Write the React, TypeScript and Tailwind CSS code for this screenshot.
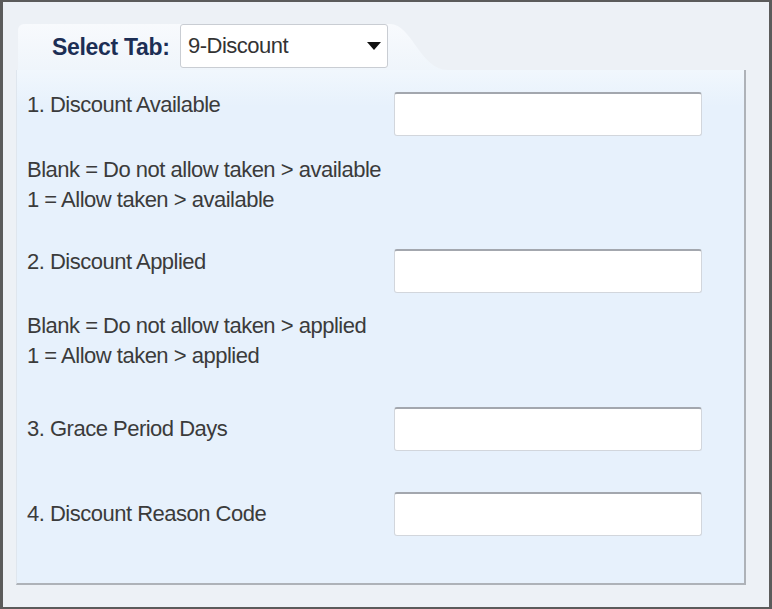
import React from "react";

const font = { fontFamily: '"Liberation Sans", Arial, sans-serif' };

function Field() {
  return (
    <div className="w-[308px] h-[44px] shrink-0 bg-white rounded-[3px] border border-[#d2d6dc] border-t-2 border-t-[#a3a7ae]" />
  );
}

export default function App() {
  return (
    <div
      className="w-[772px] h-[609px] box-border bg-[#edf1f6] border-[#5b5b5b] border-l-[3px] border-r-[3px] border-t-2 border-b-2 pl-[13px] pt-[22px] text-[#3b3b3b]"
      style={font}
    >
      {/* Header tab row */}
      <div className="flex h-[46px]">
        <div className="ml-[2px] w-[372px] h-full rounded-tl-[6px] bg-[linear-gradient(to_bottom,#f8fafd,#eff5fb)] flex items-center pl-[34px]">
          <span className="text-[23px] font-bold text-[#1c2e55] leading-none tracking-[-0.3px] w-[128px]">Select Tab:</span>
          <div className="-mt-[3px] w-[208px] h-[44px] bg-white rounded-[3px] border border-[#c9cdd3] flex items-center pl-[7px] pr-[6px]">
            <span className="text-[22px] text-[#333] leading-none flex-1 tracking-[-0.5px]">9-Discount</span>
            <svg width="14" height="8" viewBox="0 0 14 8">
              <path d="M0 0 L14 0 L7 8 Z" fill="#111" />
            </svg>
          </div>
        </div>
        <svg width="58" height="46" viewBox="0 0 58 46" className="shrink-0">
          <defs>
            <linearGradient id="tg" x1="0" y1="0" x2="0" y2="1">
              <stop offset="0" stopColor="#f8fafd" />
              <stop offset="1" stopColor="#eff5fb" />
            </linearGradient>
          </defs>
          <path d="M0 0 C 22 0, 30 46, 58 46 L0 46 Z" fill="url(#tg)" />
        </svg>
      </div>

      {/* Panel */}
      <div className="w-[730px] h-[515px] box-border border-l border-l-[#dfe6ee] border-r-2 border-b-2 border-r-[#aeb2b8] border-b-[#aeb2b8] bg-[linear-gradient(to_bottom,#f1f7fd_0px,#e7f1fc_36px)] pl-[10px] pt-[22px] text-[22px] tracking-[-0.5px]">
        <div className="flex items-start">
          <div className="w-[367px] leading-[24px] mt-[1px]">1. Discount Available</div>
          <Field />
        </div>
        <div className="mt-[19px] leading-[30px]">
          <div>Blank = Do not allow taken &gt; available</div>
          <div>1 = Allow taken &gt; available</div>
        </div>

        <div className="flex items-start mt-[34px]">
          <div className="w-[367px] leading-[24px] mt-[1px]">2. Discount Applied</div>
          <Field />
        </div>
        <div className="mt-[18px] leading-[30px]">
          <div>Blank = Do not allow taken &gt; applied</div>
          <div>1 = Allow taken &gt; applied</div>
        </div>

        <div className="flex items-center mt-[36px]">
          <div className="w-[367px] leading-[24px]">3. Grace Period Days</div>
          <Field />
        </div>

        <div className="flex items-center mt-[41px]">
          <div className="w-[367px] leading-[24px]">4. Discount Reason Code</div>
          <Field />
        </div>
      </div>
    </div>
  );
}
